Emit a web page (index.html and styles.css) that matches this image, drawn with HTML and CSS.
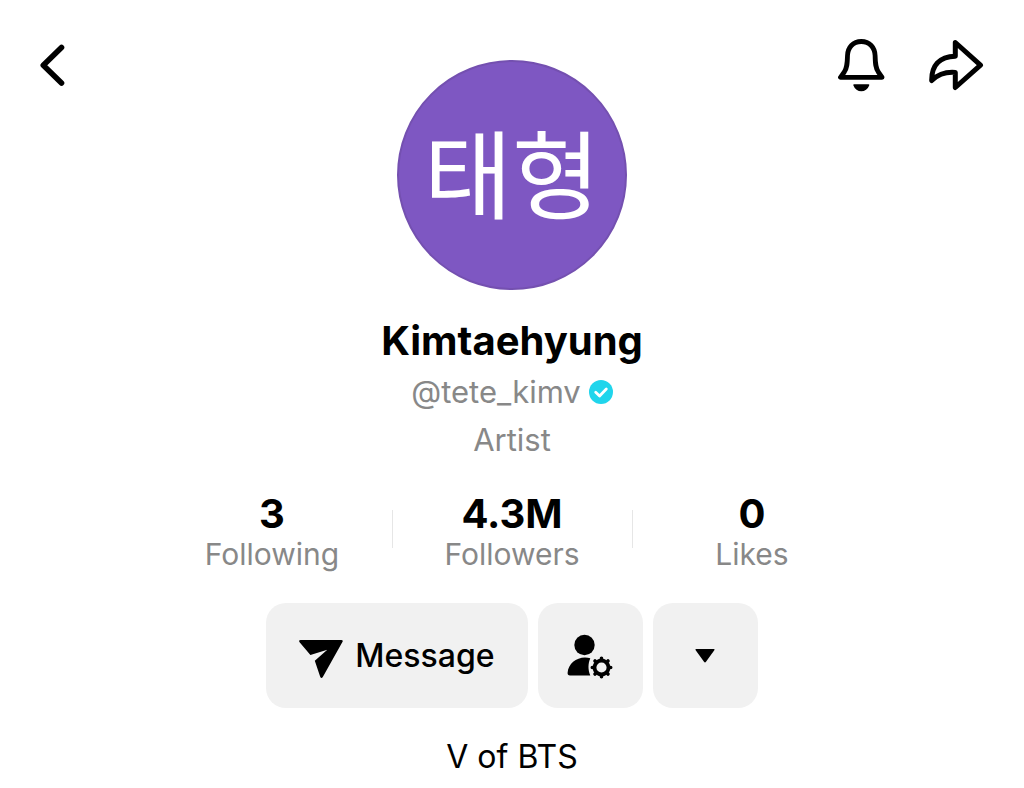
FILE: index.html
```html
<!DOCTYPE html>
<html lang="en">
<head>
    <meta charset="UTF-8">
    <meta name="viewport" content="width=device-width, initial-scale=1.0">
    <title>Kimtaehyung (@tete_kimv)</title>
    <link rel="stylesheet" href="styles.css">
</head>
<body>

    <div class="profile">
        <header class="top">
            <button class="btn-icon" aria-label="Back">
                <svg width="26" height="54" viewBox="0 0 26 54" fill="none" stroke="#000" stroke-width="5.600">
                    <path d="M21.500 9.500 3.300 27.300 21.500 45" stroke-linecap="round" stroke-linejoin="round"/>
                </svg>
            </button>
            <div class="avatar" lang="ko">태형</div>
            <div class="top-actions">
                <button class="btn-icon" aria-label="Notifications">
                    <svg width="48" height="54" viewBox="0 0 48 54">
                        <path d="M23.300 3.500C15 3.500 9.800 9.500 9.500 17.500C9.300 26 9 30 6.300 34L2.500 39.300H44.100L40.300 34C37.600 30 37.300 26 37.100 17.500C36.800 9.500 31.600 3.500 23.300 3.500Z" fill="none" stroke="#000" stroke-width="4.800" stroke-linejoin="round"/>
                        <path d="M16.200 46.200H30.400Q31.700 46.200 31.200 47.400C29.800 51.200 26.800 53.300 23.300 53.300S16.800 51.200 15.400 47.400Q14.900 46.200 16.200 46.200Z"/>
                    </svg>
                </button>
                <button class="btn-icon" aria-label="Share">
                    <svg width="56" height="54" viewBox="0 0 56 54" fill="none" stroke="#000" stroke-width="5" stroke-linejoin="round">
                        <path d="M27.300 4.500 52.500 27.200 27.300 49.500V34.500C17.500 33.700 10 36.500 3.700 42.500C3.500 28 11 18.500 27.300 18.200Z"/>
                    </svg>
                </button>
            </div>
        </header>

        <h1>Kimtaehyung</h1>
        <div class="handle">
            @tete_kimv
            <svg width="24" height="24" viewBox="0 0 24 24" role="img" aria-label="Verified">
                <circle cx="12" cy="12" r="12" fill="#20d5ec"/>
                <path d="M6.700 12.200 10.600 16 17.300 9" fill="none" stroke="#fff" stroke-width="2.800" stroke-linecap="round" stroke-linejoin="round"/>
            </svg>
        </div>
        <div class="category">Artist</div>

        <div class="stats">
            <div class="stat"><strong>3</strong><span>Following</span></div>
            <div class="stat"><strong>4.3M</strong><span>Followers</span></div>
            <div class="stat"><strong>0</strong><span>Likes</span></div>
        </div>

        <div class="buttons">
            <button class="btn btn-message">
                <svg width="44" height="44" viewBox="0 0 44 44">
                    <path d="M1.700 6H42.300Q44.500 6 43.400 8L23.800 43Q22.300 45 21.200 42.700L15.800 26.700L28.300 15.800L11.400 21L.6 8.300Q-.8 6 1.700 6Z"/>
                </svg>
                Message
            </button>
            <button class="btn" aria-label="Manage following">
                <svg width="46" height="46" viewBox="0 0 46 46">
                    <circle cx="17.500" cy="12" r="10.200"/>
                    <path d="M23.300 25.200C21 30.500 20.800 36.500 23.300 42.500H3Q.4 42.500 .6 39.800C1.200 31 9 24.500 18 24.500Q21 24.500 23.300 25.200Z"/>
                    <circle cx="34.500" cy="34.500" r="7" fill="none" stroke="#000" stroke-width="3.800"/>
                    <!-- gear teeth -->
                    <path d="M34.500 25.700V25.300M34.500 43.300V43.700M25.700 34.500H25.300M43.300 34.500H43.700M28.300 28.300 28 28M40.700 40.700 41 41M28.300 40.700 28 41M40.700 28.300 41 28" stroke="#000" stroke-width="3.600" stroke-linecap="round"/>
                </svg>
            </button>
            <button class="btn" aria-label="Suggested accounts">
                <svg width="20" height="14" viewBox="0 0 20 14">
                    <path d="M1.200 0H18.800Q20.300 0 19.300 1.300L11 12.800Q10 14 9 12.800L.7 1.300Q-.3 0 1.200 0Z"/>
                </svg>
            </button>
        </div>

        <p class="bio">V of BTS</p>
    </div>

</body>
</html>
```
FILE: styles.css
```css
*{
    box-sizing: border-box;
}

body{
    margin: 0;
    background-color: #fff;
    color: #000;
    font-family: 'Inter', 'Noto Sans CJK KR', sans-serif;
}

button{
    padding: 0;
    border: 0;
    color: inherit;
    font-family: inherit;
    cursor: pointer;
}

svg{
    display: block;
}

.profile{
    display: flex;
    flex-direction: column;
    align-items: center;
}

.top{
    width: 100%;
    padding: 38px 40px 0;
    display: grid;
    grid-template-columns: 1fr 230px 1fr;
    align-items: start;
}

.btn-icon{
    justify-self: start;
    background: none;
}

.avatar{
    height: 230px;
    margin-top: 22px;
    border: 2px solid #7450b0;
    border-radius: 50%;
    background-color: #7e57c2;
    color: #fff;
    font-family: 'Noto Sans CJK KR', sans-serif;
    font-size: 96px;
    line-height: 216px;
    text-align: center;
}

.top-actions{
    justify-self: end;
    display: flex;
    gap: 42px;
}

h1{
    margin: 27px 0 3px;
    font-size: 40px;
    line-height: 48px;
    font-weight: 700;
}

.handle,
.category{
    color: #888;
    font-size: 31px;
    line-height: 48px;
}

.handle{
    display: flex;
    align-items: center;
    gap: 8px;
}

.stats{
    margin-top: 28px;
    display: flex;
}

.stat{
    width: 240px;
    display: flex;
    flex-direction: column;
    align-items: center;
    background: linear-gradient(#e6e6e6, #e6e6e6) no-repeat left 18px / 1px 38px;
}
.stat:first-child{
    background: none;
}

.stat strong{
    font-size: 40px;
    line-height: 44px;
}

.stat span{
    color: #888;
    font-size: 30px;
    line-height: 36px;
}

.buttons{
    margin-top: 31px;
    display: flex;
    gap: 10px;
}

.btn{
    min-width: 105px;
    height: 105px;
    display: flex;
    align-items: center;
    justify-content: center;
    border-radius: 20px;
    background-color: #f1f1f1;
}

.btn-message{
    padding: 0 33px;
    gap: 12px;
    font-size: 32px;
    font-weight: 500;
}

.bio{
    margin: 29px 0 0;
    font-size: 32px;
    line-height: 40px;
}
```
